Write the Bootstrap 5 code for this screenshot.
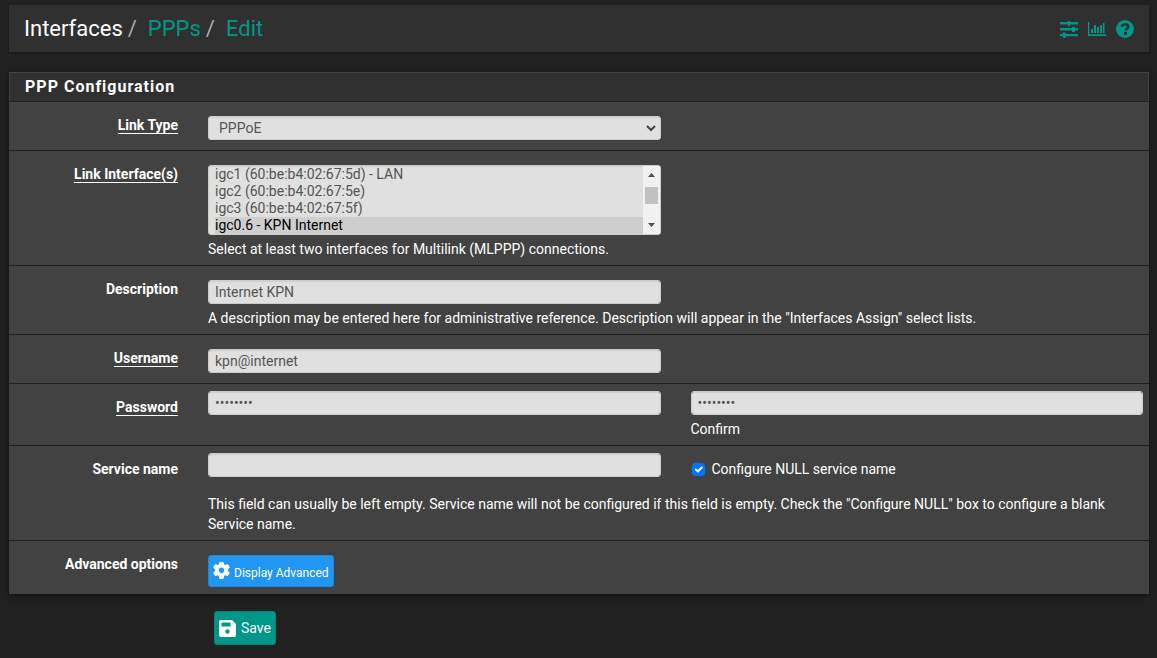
<!DOCTYPE html>
<html lang="en" data-bs-theme="dark">
<head>
<meta charset="utf-8">
<meta name="viewport" content="width=device-width, initial-scale=1">
<title>Interfaces: PPPs: Edit</title>
<link href="https://cdn.jsdelivr.net/npm/bootstrap@5.3.0/dist/css/bootstrap.min.css" rel="stylesheet">
<style>
  body { background: #212121; color: #fff; font: 14px/20px Roboto, "Open Sans", sans-serif; }
  .page { padding: 5px 8px 0 9px; }
  a { color: #009688; text-decoration: none; }
  .topbar { background: #303030; height: 47px; padding: 0 15px; margin-bottom: 20px; box-shadow: 0 1px 2px rgba(0,0,0,.3); }
  .crumbs { --bs-breadcrumb-divider-color: #aaa; font-size: 22px; line-height: 32px; }
  .crumbs .breadcrumb-item + .breadcrumb-item { padding-left: 5px; }
  .crumbs .breadcrumb-item + .breadcrumb-item::before { padding-right: 11px; }
  .tools { gap: 9px; }
  .panel { background: #424242; box-shadow: 0 2px 6px rgba(0,0,0,.5); }
  .panel-title { background: #303030; border: 1px solid #424242; border-bottom-color: #212121; font-size: 16px; font-weight: 700; line-height: 28px; letter-spacing: 1px; padding: 0 15px; margin: 0; }
  .field-row { border-bottom: 1px solid #212121; padding: 14px 0 6px; overflow: hidden; }
  .field-row:last-child { border-bottom: 0; }
  .field-row > .row { --bs-gutter-x: 30px; margin: 0 -9px; }
  .bare { padding-bottom: 10px; }
  .tight { padding-top: 7px; }
  .tight .name { padding-top: 7px; }
  .name { text-align: right; font-weight: 700; line-height: 18px; }
  .name .req { border-bottom: 1px solid #fff; line-height: 16px; display: inline-block; }
  .field { height: 24px; min-height: 0; padding: 0 6px; font-size: 14px; line-height: 22px; border: 1px solid #ccc; border-radius: 3px; background-color: #e0e0e0; color: #555; box-shadow: inset 0 1px 1px rgba(0,0,0,.08); }
  .field:focus { background-color: #e0e0e0; color: #555; }
  select.pick { padding-left: 10px; background: #e0e0e0 url("data:image/svg+xml,%3Csvg xmlns='http://www.w3.org/2000/svg' viewBox='0 0 10 7'%3E%3Cpath d='M1 1l4 4 4-4' fill='none' stroke='%23444' stroke-width='2'/%3E%3C/svg%3E") no-repeat right 4px center / 10px 7px; }
  .field.many { height: 70px; padding: 0 23px 0 6px; background-image: none; overflow-y: scroll; scrollbar-width: none; }
  .many::-webkit-scrollbar { display: none; }
  .many option { padding: 0; min-height: 17px; height: 17px; line-height: 17px; }
  .many option:checked { background: #cecece linear-gradient(#cecece, #cecece); color: #000; }
  .scroller { width: 17px; top: 1px; bottom: 1px; right: 1px; background: #f1f1f1; border-radius: 0 2px 2px 0; pointer-events: none; }
  .scroller svg { height: 17px; }
  .thumb { height: 17px; width: 13px; background: #c1c1c1; margin: 4px auto 13px; }
  .hint { display: block; margin-top: 4px; }
  .hint-wide { margin-top: 15px; }
  .tick-label { padding-top: 6px; }
  .tick { margin: 1px 7px 0 1px; width: 13px; height: 13px; border: 0; border-radius: 2px; }
  .tick:checked { background-color: #0075ff; }
  .btn { --bs-btn-border-radius: 3px; color: #fff; }
  .btn-adv { background: #2196f3; border-color: #1b87dd; height: 32px; padding: 0 4px; font-size: 12px; line-height: 18px; margin-bottom: 1px; }
  .btn-save { background: #009688; border-color: #008478; height: 34px; padding: 0 4px; font-size: 14px; line-height: 20px; gap: 5px; }
  .btn:hover { color: #fff; background: #00796b; }
  .actions { margin: 17px 0 13px 205px; }
</style>
</head>
<body>
<div class="page">
  <header class="topbar d-flex align-items-center justify-content-between">
    <nav aria-label="breadcrumb">
      <ol class="breadcrumb crumbs mb-0">
        <li class="breadcrumb-item">Interfaces</li>
        <li class="breadcrumb-item"><a href="#">PPPs</a></li>
        <li class="breadcrumb-item"><a href="#">Edit</a></li>
      </ol>
    </nav>
    <div class="tools d-flex align-items-center">
      <a href="#" class="d-flex" aria-label="Settings"><svg width="20" height="18" viewBox="0 0 20 18" fill="currentColor"><path d="M1 2h8V1h2v1h8v2.500h-8V6H9V4.500H1zM1 8h12V7h3v1h3v2.500h-3V12h-3v-1.500H1zM1 14h3v-1.500h2.500V14H19v2.300H6.500V18H4v-1.700H1z"/></svg></a>
      <a href="#" class="d-flex" aria-label="Status"><svg width="19" height="16" viewBox="0 0 19 16" fill="currentColor"><path d="M0 1h1.300v12.200H18V15H0zM3 8h2v4H3zM6 4h2v8H6zM9 6h2v6H9zM12 4h2v8h-2zM15 2h1.500v10H15z"/></svg></a>
      <a href="#" class="d-flex" aria-label="Help"><svg width="18" height="18" viewBox="0 0 18 18"><circle cx="9" cy="9" r="9" fill="currentColor"/><path d="M5.800 6.600C6.200 4.900 7.300 4.200 9 4.200c1.800 0 3.200 1 3.200 2.600 0 2-2.700 2-2.700 3.900" fill="none" stroke="#303030" stroke-width="2.600"/><path d="M8 12h3v2.700H8z" fill="#303030"/></svg></a>
    </div>
  </header>

  <form class="mb-0">
    <section class="panel">
      <h2 class="panel-title">PPP Configuration</h2>
      <div class="field-row bare"><div class="row">
        <label class="col-2 name" for="type"><span class="req">Link Type</span></label>
        <div class="col-5"><select id="type" class="form-select field pick"><option>PPPoE</option></select></div>
      </div></div>
      <div class="field-row"><div class="row">
        <label class="col-2 name" for="ifs"><span class="req">Link Interface(s)</span></label>
        <div class="col-5">
          <div class="position-relative">
            <select id="ifs" class="form-select field many" multiple size="4">
              <option>igc0 (60:be:b4:02:67:5c) - WAN</option>
              <option>igc1 (60:be:b4:02:67:5d) - LAN</option>
              <option>igc2 (60:be:b4:02:67:5e)</option>
              <option>igc3 (60:be:b4:02:67:5f)</option>
              <option selected>igc0.6 - KPN Internet</option>
              <option>igc0.4 - KPN TV</option>
              <option>igc1.10 - Guest</option>
              <option>igc1.20 - IoT</option>
            </select>
            <div class="scroller position-absolute" aria-hidden="true">
              <svg class="d-block" width="17" viewBox="0 0 17 17"><path d="M5 11l3.500-4 3.500 4z" fill="#505050"/></svg>
              <div class="thumb"></div>
              <svg class="d-block" width="17" viewBox="0 0 17 17"><path d="M5 6l3.500 4L12 6z" fill="#505050"/></svg>
            </div>
          </div>
          <span class="hint">Select at least two interfaces for Multilink (MLPPP) connections.</span>
        </div>
      </div></div>
      <div class="field-row"><div class="row">
        <label class="col-2 name" for="descr">Description</label>
        <div class="col-5"><input id="descr" type="text" class="form-control field" value="Internet KPN"></div>
        <div class="col-10 offset-2"><span class="hint">A description may be entered here for administrative reference. Description will appear in the "Interfaces Assign" select lists.</span></div>
      </div></div>
      <div class="field-row bare"><div class="row">
        <label class="col-2 name" for="user"><span class="req">Username</span></label>
        <div class="col-5"><input id="user" type="text" class="form-control field" value="kpn@internet"></div>
      </div></div>
      <div class="field-row tight"><div class="row">
        <label class="col-2 name" for="pass"><span class="req">Password</span></label>
        <div class="col-5"><input id="pass" type="password" class="form-control field" value="password"></div>
        <div class="col-5"><input id="pass2" type="password" class="form-control field" value="password"><label class="hint" for="pass2">Confirm</label></div>
      </div></div>
      <div class="field-row tight"><div class="row">
        <label class="col-2 name" for="svc">Service name</label>
        <div class="col-5"><input id="svc" type="text" class="form-control field"></div>
        <div class="col-5"><label class="tick-label d-flex align-items-center" for="nul"><input id="nul" type="checkbox" class="form-check-input tick" checked>Configure NULL service name</label></div>
        <div class="col-10 offset-2"><span class="hint hint-wide">This field can usually be left empty. Service name will not be configured if this field is empty. Check the "Configure NULL" box to configure a blank Service name.</span></div>
      </div></div>
      <div class="field-row"><div class="row">
        <div class="col-2 name">Advanced options</div>
        <div class="col-10"><button type="button" class="btn btn-adv d-flex align-items-center"><svg class="me-1" width="17" height="18" viewBox="0 0 17 18" fill="#fff" stroke="#fff" stroke-linejoin="round"><path fill-rule="evenodd" d="M6.800.5h3.400l.5 2.100 1.500.9 2.500-.9 1.700 2.900-2 1.800V9l2 1.800-1.700 2.900-2.500-.9-1.500.9-.5 2.700H6.800l-.5-2.700-1.500-.9-2.500.9-1.700-2.900 2-1.800V7.300l-2-1.800 1.700-2.900 2.500.9 1.500-.9zM8.500 5a3.300 3.300 0 100 6.600 3.300 3.300 0 000-6.600z"/></svg><span class="pt-1">Display Advanced</span></button></div>
      </div></div>
    </section>
    <div class="actions"><button type="submit" class="btn btn-save d-flex align-items-center"><svg width="17" height="17" viewBox="0 0 17 17" fill="#fff"><path fill-rule="evenodd" d="M2 0h11l4 4v11a2 2 0 01-2 2H2a2 2 0 01-2-2V2a2 2 0 012-2zM2.500 2.500v4h9v-4zM8.500 9.300a2.200 2.200 0 100 4.400 2.200 2.200 0 000-4.400z"/></svg>Save</button></div>
  </form>
</div>
<script src="https://cdn.jsdelivr.net/npm/bootstrap@5.3.0/dist/js/bootstrap.bundle.min.js"></script>
<script>
  const list = document.getElementById('ifs');
  requestAnimationFrame(() => { list.scrollTop = list.options[1].offsetTop - list.options[0].offsetTop; });
</script>
</body>
</html>
